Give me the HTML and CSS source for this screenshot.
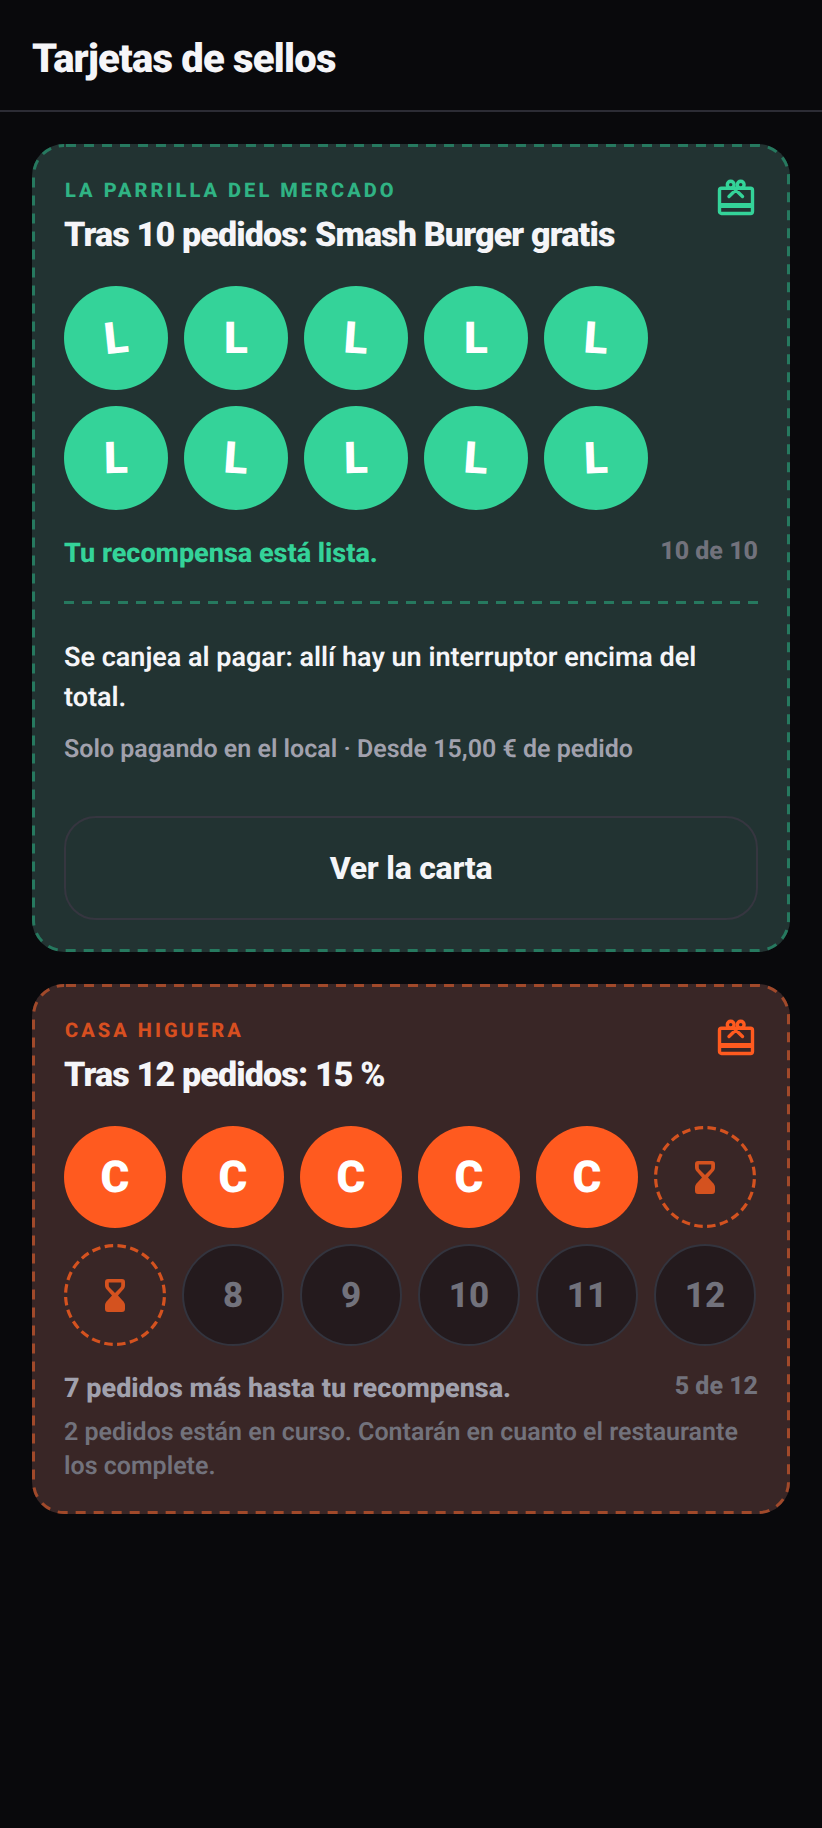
FILE: index.html
```html
<!DOCTYPE html>
<html lang="es">
<head>
<meta charset="utf-8">
<title>Tarjetas de sellos</title>
<link rel="stylesheet" href="styles.css">
</head>
<body>
<header class="topbar"><h1 class="page-title">Tarjetas de sellos</h1></header>
<main class="list">
  <section class="card card-green">
    <svg class="frame" aria-hidden="true"><rect></rect></svg>
    <div class="card-head">
      <div>
        <div class="brand">LA PARRILLA DEL MERCADO</div>
        <h2 class="reward">Tras 10 pedidos: Smash Burger gratis</h2>
      </div>
      <svg class="gift" viewBox="0 0 44 44" fill="none" stroke="currentColor" stroke-width="3.400" stroke-linecap="round" stroke-linejoin="round"><rect x="5.500" y="12.200" width="33" height="25.300" rx="2"/><path d="M5.500 29.500H38.500" stroke-width="5" stroke-linecap="butt"/><circle cx="16.700" cy="8.700" r="3.400"/><circle cx="26.700" cy="8.700" r="3.400"/><path d="M19 11.500L21.700 14L24.400 11.500M21.700 14L15 20.500M21.700 14L28.500 20.500"/></svg>
    </div>
    <div class="stamps stamps-five">
      <div class="stamp filled"><span class="tilt-l6">L</span></div>
      <div class="stamp filled"><span>L</span></div>
      <div class="stamp filled"><span class="tilt-r4">L</span></div>
      <div class="stamp filled"><span>L</span></div>
      <div class="stamp filled"><span class="tilt-r4">L</span></div>
      <div class="stamp filled"><span class="tilt-l1">L</span></div>
      <div class="stamp filled"><span class="tilt-r4">L</span></div>
      <div class="stamp filled"><span class="tilt-l1">L</span></div>
      <div class="stamp filled"><span class="tilt-r4">L</span></div>
      <div class="stamp filled"><span class="tilt-l2">L</span></div>
    </div>
    <div class="status-row">
      <div class="status ready">Tu recompensa está lista.</div>
      <div class="count">10 de 10</div>
    </div>
    <div class="redeem">
      <p class="redeem-text">Se canjea al pagar: allí hay un interruptor encima del total.</p>
      <p class="redeem-note">Solo pagando en el local · Desde 15,00 € de pedido</p>
    </div>
    <button class="menu-btn" type="button">Ver la carta</button>
  </section>

  <section class="card card-orange">
    <svg class="frame" aria-hidden="true"><rect></rect></svg>
    <div class="card-head">
      <div>
        <div class="brand">CASA HIGUERA</div>
        <h2 class="reward">Tras 12 pedidos: 15 %</h2>
      </div>
      <svg class="gift" viewBox="0 0 44 44" fill="none" stroke="currentColor" stroke-width="3.400" stroke-linecap="round" stroke-linejoin="round"><rect x="5.500" y="12.200" width="33" height="25.300" rx="2"/><path d="M5.500 29.500H38.500" stroke-width="5" stroke-linecap="butt"/><circle cx="16.700" cy="8.700" r="3.400"/><circle cx="26.700" cy="8.700" r="3.400"/><path d="M19 11.500L21.700 14L24.400 11.500M21.700 14L15 20.500M21.700 14L28.500 20.500"/></svg>
    </div>
    <div class="stamps stamps-six">
      <div class="stamp filled"><span>C</span></div>
      <div class="stamp filled"><span>C</span></div>
      <div class="stamp filled"><span>C</span></div>
      <div class="stamp filled"><span>C</span></div>
      <div class="stamp filled"><span>C</span></div>
      <div class="stamp pending"><svg class="ring" viewBox="0 0 102 102"><circle cx="51" cy="51" r="49.400"></circle></svg><svg class="hourglass" viewBox="0 0 20 33"><path fill-rule="evenodd" d="M3 0H17A3 3 0 0 1 20 3V6.500C20 8.500 19 9.800 18 10.800L13 16.500L18 22C19 23 20 24.500 20 26.500V30A3 3 0 0 1 17 33H3A3 3 0 0 1 0 30V26.500C0 24.500 1 23 2 22L7 16.500L2 10.800C1 9.800 0 8.500 0 6.500V3A3 3 0 0 1 3 0ZM3.800 3.500V6.500C3.800 7.500 4.300 8.300 4.800 8.800L10 14L15.200 8.800C15.700 8.300 16.200 7.500 16.200 6.500V3.500Z"/></svg></div>
      <div class="stamp pending"><svg class="ring" viewBox="0 0 102 102"><circle cx="51" cy="51" r="49.400"></circle></svg><svg class="hourglass" viewBox="0 0 20 33"><path fill-rule="evenodd" d="M3 0H17A3 3 0 0 1 20 3V6.500C20 8.500 19 9.800 18 10.800L13 16.500L18 22C19 23 20 24.500 20 26.500V30A3 3 0 0 1 17 33H3A3 3 0 0 1 0 30V26.500C0 24.500 1 23 2 22L7 16.500L2 10.800C1 9.800 0 8.500 0 6.500V3A3 3 0 0 1 3 0ZM3.800 3.500V6.500C3.800 7.500 4.300 8.300 4.800 8.800L10 14L15.200 8.800C15.700 8.300 16.200 7.500 16.200 6.500V3.500Z"/></svg></div>
      <div class="stamp empty"><span>8</span></div>
      <div class="stamp empty"><span>9</span></div>
      <div class="stamp empty"><span>10</span></div>
      <div class="stamp empty"><span>11</span></div>
      <div class="stamp empty"><span>12</span></div>
    </div>
    <div class="status-row status-row-tight">
      <div class="status">7 pedidos más hasta tu recompensa.</div>
      <div class="count">5 de 12</div>
    </div>
    <p class="pending-note">2 pedidos están en curso. Contarán en cuanto el restaurante los complete.</p>
  </section>
</main>
</body>
</html>
```

FILE: styles.css
```css
* { box-sizing: border-box; }
html, body { margin: 0; padding: 0; }
body {
  background: #09090c;
  color: #f5f5f8;
  font-family: Roboto, "Liberation Sans", sans-serif;
  text-rendering: geometricPrecision;
  min-height: 1828px;
}
.topbar {
  height: 112px;
  padding: 8px 32px 0;
  display: flex;
  align-items: center;
  border-bottom: 2px solid #2c2c35;
}
.page-title {
  margin: 0;
  font-size: 40px;
  line-height: 1;
  font-weight: 900;
  letter-spacing: -0.8px;
  color: #f5f5f8;
}
.list {
  padding: 32px;
  display: flex;
  flex-direction: column;
  gap: 32px;
}
.card {
  position: relative;
  border-radius: 32px;
  padding: 32px;
}
.card-green { background: #223332; color: #34d399; --frame: #26795f; }
.card-orange { background: #392626; color: #ff5a1f; --frame: #a1492a; padding-bottom: 30px; }
.frame {
  position: absolute;
  inset: 0;
  width: 100%;
  height: 100%;
  pointer-events: none;
}
.frame rect {
  x: 1.5px;
  y: 1.5px;
  width: calc(100% - 3px);
  height: calc(100% - 3px);
  rx: 30.5px;
  fill: none;
  stroke: var(--frame);
  stroke-width: 3px;
  stroke-dasharray: 10 8;
  stroke-dashoffset: -2;
}
.card-head {
  display: flex;
  justify-content: space-between;
  align-items: flex-start;
}
.brand {
  font-size: 20px;
  line-height: 28px;
  font-weight: 800;
  letter-spacing: 3.05px;
  padding-left: 1px;
  opacity: .8;
}
.reward {
  margin: 9px 0 0;
  font-size: 34px;
  line-height: 44px;
  font-weight: 900;
  letter-spacing: -0.83px;
  color: #f5f5f8;
}
.gift { width: 44px; height: 44px; flex: none; }
.stamps { display: grid; gap: 16px; margin-top: 29px; }
.stamps-five { grid-template-columns: repeat(5, 104px); }
.stamps-six { grid-template-columns: repeat(6, 102px); }
.stamp {
  position: relative;
  aspect-ratio: 1;
  border-radius: 50%;
  display: flex;
  align-items: center;
  justify-content: center;
  font-size: 44px;
  font-weight: 900;
}
.stamp span { display: block; line-height: 1; }
.filled { background: currentColor; }
.filled span { color: #fff; }
span.tilt-l6 { transform: rotate(-6deg); }
span.tilt-l2 { transform: rotate(-2deg); }
span.tilt-l1 { transform: rotate(-1deg); }
span.tilt-r4 { transform: rotate(4deg); }
.pending { color: #d4521f; }
.ring {
  position: absolute;
  inset: 0;
  width: 100%;
  height: 100%;
}
.ring circle {
  fill: none;
  stroke: currentColor;
  stroke-width: 3.2;
  stroke-dasharray: 8.5 4.43;
  stroke-dashoffset: -2.2;
}
.hourglass { width: 20px; height: 33px; fill: currentColor; }
.empty {
  background: #241a1d;
  border: 2.5px solid #33343e;
  font-size: 35px;
  font-weight: 800;
}
.empty span { color: #72727c; }
.status-row {
  display: flex;
  justify-content: space-between;
  align-items: flex-start;
  gap: 16px;
  margin-top: 25px;
}
.status-row-tight { margin-top: 24px; }
.status { font-size: 27px; line-height: 36px; font-weight: 800; color: #a1a1ad; }
.status.ready { color: #34d399; }
.count { font-size: 25px; line-height: 34px; font-weight: 800; color: #72727c; }
.redeem { margin-top: 30px; }
.redeem::before {
  content: "";
  display: block;
  height: 3px;
  margin-bottom: 33px;
  background: repeating-linear-gradient(90deg, #26795f 0 10px, transparent 10px 18px);
}
.redeem-text {
  margin: 0;
  font-size: 27px;
  line-height: 40px;
  font-weight: 600;
  color: #f5f5f8;
}
.redeem-note {
  margin: 16px 0 0;
  font-size: 25px;
  line-height: 34px;
  font-weight: 600;
  color: #a1a1ad;
}
.menu-btn {
  display: block;
  width: 100%;
  height: 104px;
  margin-top: 49px;
  background: transparent;
  border: 2px solid #363640;
  border-radius: 32px;
  color: #f5f5f8;
  font-family: inherit;
  font-size: 32px;
  font-weight: 800;
  letter-spacing: -0.25px;
}
.pending-note {
  margin: 10px 0 0;
  font-size: 25px;
  line-height: 34px;
  font-weight: 600;
  color: #72727c;
}
```
